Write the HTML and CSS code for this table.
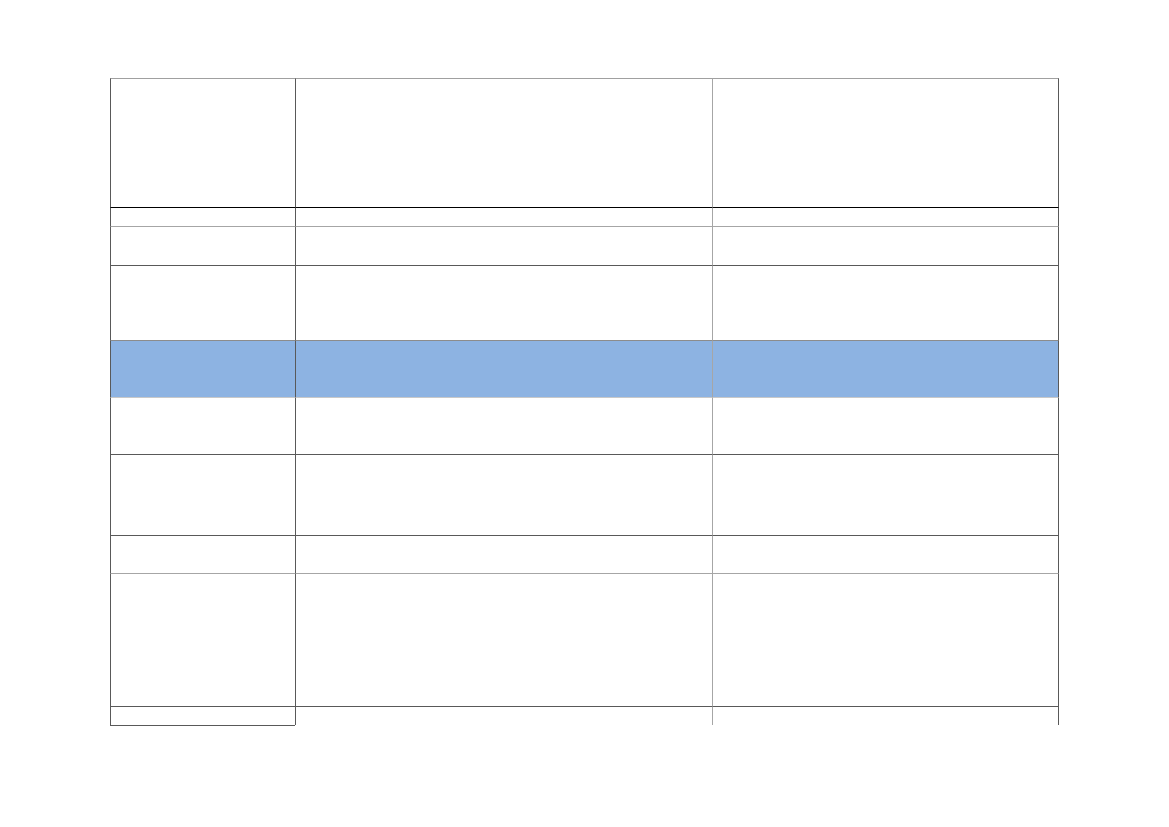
FILE: index.html
```html
<!DOCTYPE html>
<html>
<head>
<meta charset="utf-8">
<link rel="stylesheet" href="styles.css">
</head>
<body>
<div class="page">
  <div class="table">
    <div class="cell c1 r1"></div><div class="cell c2 r1"></div><div class="cell c3 r1"></div>
    <div class="cell c1 r2"></div><div class="cell c2 r2"></div><div class="cell c3 r2"></div>
    <div class="cell c1 r3"></div><div class="cell c2 r3"></div><div class="cell c3 r3"></div>
    <div class="cell c1 r4"></div><div class="cell c2 r4"></div><div class="cell c3 r4"></div>
    <div class="cell c1 r5 blue"></div><div class="cell c2 r5 blue"></div><div class="cell c3 r5 blue"></div>
    <div class="cell c1 r6"></div><div class="cell c2 r6"></div><div class="cell c3 r6"></div>
    <div class="cell c1 r7"></div><div class="cell c2 r7"></div><div class="cell c3 r7"></div>
    <div class="cell c1 r8"></div><div class="cell c2 r8"></div><div class="cell c3 r8"></div>
    <div class="cell c1 r9"></div><div class="cell c2 r9"></div><div class="cell c3 r9"></div>
    <div class="cell c1 r10 last"></div><div class="cell c2 r10 tail"></div><div class="cell c3 r10 tail"></div>
  </div>
</div>
</body>
</html>
```
FILE: styles.css
```css
html, body {
  margin: 0;
  padding: 0;
  background: #ffffff;
  font-family: "Liberation Sans", Arial, sans-serif;
}
.page {
  width: 1169px;
  height: 827px;
  padding: 78px 0 0 110px;
  box-sizing: border-box;
}
.table {
  display: grid;
  grid-template-columns: 185px 417px 347px;
  grid-template-rows: 129px 19px 39px 75px 57px 57px 81px 38px 133px 20px;
  align-items: start;
}
.cell {
  box-sizing: border-box;
  height: 100%;
  border-top: 1px solid #595959;
  border-left: 1px solid #595959;
}
.c2 { border-left-color: #595959; }
.c3 {
  border-left-color: #a6a6a6;
  border-right: 1px solid #595959;
}
.r1 { border-top-color: #a0a0a0; }
.r2 { border-top-color: #000000; }
.r3 { border-top-color: #a6a6a6; }
.r4 { border-top-color: #595959; }
.r5 { border-top-color: #8c8c8c; }
.r6 { border-top-color: #c8c8c8; }
.r7 { border-top-color: #595959; }
.r8 { border-top-color: #595959; }
.r9 { border-top-color: #a6a6a6; }
.r10 { border-top-color: #595959; }
.blue { background: #8db3e2; }
.last {
  border-bottom: 1px solid #595959;
}
.tail {
  height: 19px;
}
```
